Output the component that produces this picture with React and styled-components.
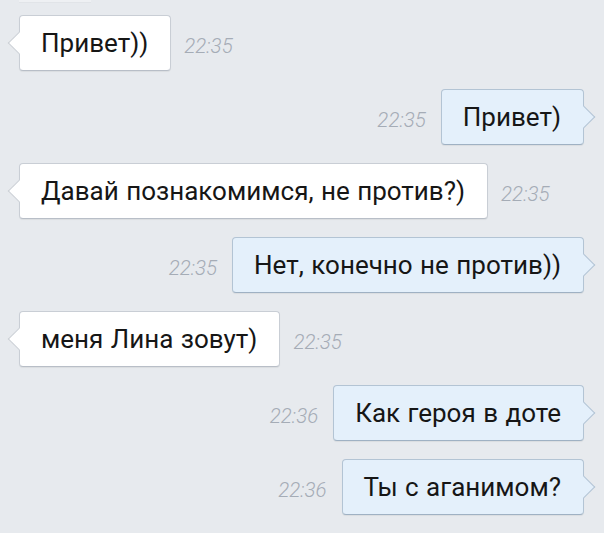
import React from "react";
import styled, { createGlobalStyle, css } from "styled-components";

const Global = createGlobalStyle`
  html, body { margin: 0; padding: 0; background: #e7eaee; }
  body { font-family: Roboto, "Noto Sans", "DejaVu Sans", sans-serif; }
`;

const Page = styled.div`
  width: 604px;
  height: 533px;
  overflow: hidden;
  background: #e7eaee;
  display: flex;
  flex-direction: column;
`;

const Stub = styled.div`
  margin-left: 19px;
  width: 72px;
  height: 2px;
  background: #eef0f3;
  border-bottom: 1px solid #e1e4e8;
`;

const List = styled.div`
  display: flex;
  flex-direction: column;
  gap: 18px;
  padding-top: 12px;
`;

const Row = styled.div`
  display: flex;
  align-items: center;
  ${(p) =>
    p.$out
      ? css`
          flex-direction: row-reverse;
          padding-right: 20px;
        `
      : css`
          padding-left: 19px;
        `}
`;

const Bubble = styled.div`
  position: relative;
  box-sizing: border-box;
  height: 56px;
  padding: 0 22px 0 21px;
  display: flex;
  align-items: center;
  font-size: 26px;
  word-spacing: 1px;
  color: #161616;
  border-radius: 4px;
  border: 1px solid ${(p) => (p.$out ? "#b3c4d4" : "#c9ced5")};
  border-bottom-color: ${(p) => (p.$out ? "#9fb1c3" : "#b8bec7")};
  background: ${(p) => (p.$out ? "#e4f0fb" : "#ffffff")};
  box-shadow: 0 1px 1px rgba(0, 0, 0, 0.06);

  &::before {
    content: "";
    position: absolute;
    top: 50%;
    width: 15px;
    height: 15px;
    background: inherit;
    border: 1px solid ${(p) => (p.$out ? "#b3c4d4" : "#c9ced5")};
    transform: translateY(-50%) rotate(45deg);
    ${(p) =>
      p.$out
        ? css`
            right: -9px;
            border-left: none;
            border-bottom: none;
          `
        : css`
            left: -9px;
            border-right: none;
            border-top: none;
          `}
  }
`;

const Time = styled.span`
  font-family: Roboto, "Noto Sans", sans-serif;
  font-style: italic;
  font-weight: 300;
  font-size: 20.5px;
  color: #a5acb6;
  padding-top: 5px;
  ${(p) => (p.$out ? "margin-right: 15px;" : "margin-left: 13px;")}
`;

const messages = [
  { out: false, text: "Привет))", time: "22:35" },
  { out: true, text: "Привет)", time: "22:35" },
  { out: false, text: "Давай познакомимся, не против?)", time: "22:35" },
  { out: true, text: "Нет, конечно не против))", time: "22:35" },
  { out: false, text: "меня Лина зовут)", time: "22:35" },
  { out: true, text: "Как героя в доте", time: "22:36" },
  { out: true, text: "Ты с аганимом?", time: "22:36" },
];

export default function App() {
  return (
    <>
      <Global />
      <Page>
        <Stub />
        <List>
          {messages.map((m, i) => (
            <Row key={i} $out={m.out}>
              <Bubble $out={m.out}>{m.text}</Bubble>
              <Time $out={m.out}>{m.time}</Time>
            </Row>
          ))}
        </List>
      </Page>
    </>
  );
}
